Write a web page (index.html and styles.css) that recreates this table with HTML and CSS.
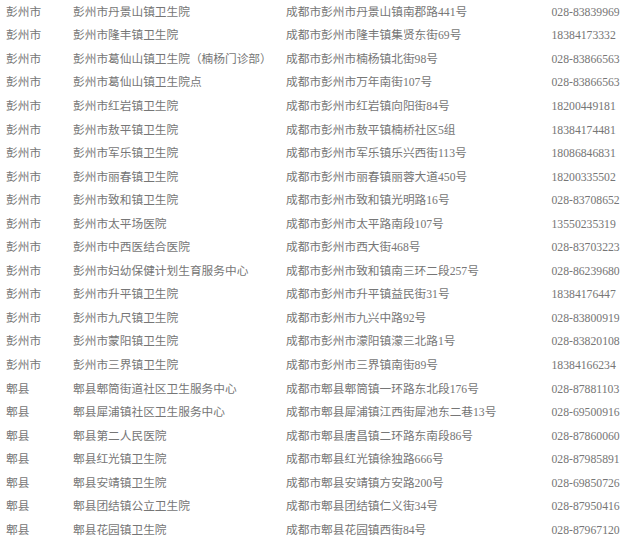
FILE: index.html
```html
<!DOCTYPE html>
<html lang="zh-CN">
<head>
<meta charset="utf-8">
<title>医疗机构列表</title>
<link rel="stylesheet" href="styles.css">
</head>
<body>
<div class="list">
  <div class="row"><span>彭州市</span><span>彭州市丹景山镇卫生院</span><span>成都市彭州市丹景山镇南郡路441号</span><span>028-83839969</span></div>
  <div class="row"><span>彭州市</span><span>彭州市隆丰镇卫生院</span><span>成都市彭州市隆丰镇集贤东街69号</span><span>18384173332</span></div>
  <div class="row"><span>彭州市</span><span>彭州市葛仙山镇卫生院（楠杨门诊部）</span><span>成都市彭州市楠杨镇北街98号</span><span>028-83866563</span></div>
  <div class="row"><span>彭州市</span><span>彭州市葛仙山镇卫生院点</span><span>成都市彭州市万年南街107号</span><span>028-83866563</span></div>
  <div class="row"><span>彭州市</span><span>彭州市红岩镇卫生院</span><span>成都市彭州市红岩镇向阳街84号</span><span>18200449181</span></div>
  <div class="row"><span>彭州市</span><span>彭州市敖平镇卫生院</span><span>成都市彭州市敖平镇楠桥社区5组</span><span>18384174481</span></div>
  <div class="row"><span>彭州市</span><span>彭州市军乐镇卫生院</span><span>成都市彭州市军乐镇乐兴西街113号</span><span>18086846831</span></div>
  <div class="row"><span>彭州市</span><span>彭州市丽春镇卫生院</span><span>成都市彭州市丽春镇丽蓉大道450号</span><span>18200335502</span></div>
  <div class="row"><span>彭州市</span><span>彭州市致和镇卫生院</span><span>成都市彭州市致和镇光明路16号</span><span>028-83708652</span></div>
  <div class="row"><span>彭州市</span><span>彭州市太平场医院</span><span>成都市彭州市太平路南段107号</span><span>13550235319</span></div>
  <div class="row"><span>彭州市</span><span>彭州市中西医结合医院</span><span>成都市彭州市西大街468号</span><span>028-83703223</span></div>
  <div class="row"><span>彭州市</span><span>彭州市妇幼保健计划生育服务中心</span><span>成都市彭州市致和镇南三环二段257号</span><span>028-86239680</span></div>
  <div class="row"><span>彭州市</span><span>彭州市升平镇卫生院</span><span>成都市彭州市升平镇益民街31号</span><span>18384176447</span></div>
  <div class="row"><span>彭州市</span><span>彭州市九尺镇卫生院</span><span>成都市彭州市九兴中路92号</span><span>028-83800919</span></div>
  <div class="row"><span>彭州市</span><span>彭州市蒙阳镇卫生院</span><span>成都市彭州市濛阳镇濛三北路1号</span><span>028-83820108</span></div>
  <div class="row"><span>彭州市</span><span>彭州市三界镇卫生院</span><span>成都市彭州市三界镇南街89号</span><span>18384166234</span></div>
  <div class="row"><span>郫县</span><span>郫县郫筒街道社区卫生服务中心</span><span>成都市郫县郫筒镇一环路东北段176号</span><span>028-87881103</span></div>
  <div class="row"><span>郫县</span><span>郫县犀浦镇社区卫生服务中心</span><span>成都市郫县犀浦镇江西街犀池东二巷13号</span><span>028-69500916</span></div>
  <div class="row"><span>郫县</span><span>郫县第二人民医院</span><span>成都市郫县唐昌镇二环路东南段86号</span><span>028-87860060</span></div>
  <div class="row"><span>郫县</span><span>郫县红光镇卫生院</span><span>成都市郫县红光镇徐独路666号</span><span>028-87985891</span></div>
  <div class="row"><span>郫县</span><span>郫县安靖镇卫生院</span><span>成都市郫县安靖镇方安路200号</span><span>028-69850726</span></div>
  <div class="row"><span>郫县</span><span>郫县团结镇公立卫生院</span><span>成都市郫县团结镇仁义街34号</span><span>028-87950416</span></div>
  <div class="row"><span>郫县</span><span>郫县花园镇卫生院</span><span>成都市郫县花园镇西街84号</span><span>028-87967120</span></div>
</div>
</body>
</html>
```
FILE: styles.css
```css
html, body {
  margin: 0;
  padding: 0;
  background: #ffffff;
}

.list {
  display: flex;
  flex-direction: column;
  padding: 1px 0 0 6px;
  font-family: "Liberation Serif", "Noto Sans CJK SC", serif;
  font-size: 11.7px;
  color: #767676;
}

.row {
  display: grid;
  grid-template-columns: 67px 213px 265.5px 1fr;
  height: 23.55px;
  align-items: center;
  white-space: nowrap;
}

.row span {
  line-height: 14px;
}
```
